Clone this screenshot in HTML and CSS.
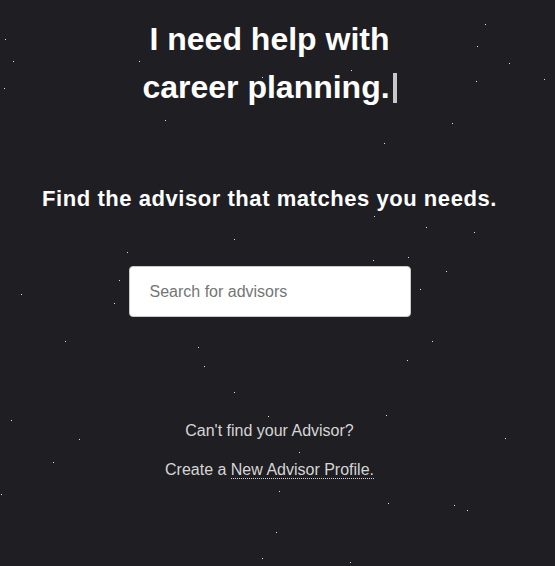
FILE: index.html
```html
<!DOCTYPE html>
<html lang="en">
<head>
<meta charset="utf-8">
<title>Find an advisor</title>
<link rel="stylesheet" href="styles.css">
</head>
<body>
<div class="stars" aria-hidden="true"></div>
<main class="page">
  <h1 class="headline">I need help with<br>career planning.<span class="cursor"></span></h1>
  <p class="subtitle">Find the advisor that matches you needs.</p>
  <div class="search">
    <input class="search-input" type="text" placeholder="Search for advisors">
  </div>
  <div class="footer-note">
    <p class="note-line">Can't find your Advisor?</p>
    <p class="note-line">Create a <a class="note-link" href="#">New Advisor Profile.</a></p>
  </div>
</main>
</body>
</html>
```

FILE: styles.css
```css
html, body {
  margin: 0;
  padding: 0;
}
body {
  background: #1f1e23;
  font-family: "Liberation Sans", Arial, sans-serif;
  color: #ffffff;
  height: 566px;
  overflow: hidden;
  position: relative;
}
.stars {
  position: absolute;
  left: 0;
  top: 0;
  width: 1px;
  height: 1px;
  background: transparent;
  box-shadow:
    5px 39px #ddd, 13px 61px #ddd, 4px 88px #ddd, 139px 61px #ddd, 165px 120px #ddd,
    234px 239px #ddd, 127px 252px #ddd, 119px 280px #ddd, 262px 77px #ddd,
    485px 24px #ddd, 477px 46px #ddd, 509px 63px #ddd, 544px 79px #ddd, 476px 81px #ddd,
    351px 70px #ddd, 452px 123px #ddd, 384px 143px #ddd, 374px 216px #ddd, 426px 227px #ddd,
    474px 232px #ddd, 373px 260px #ddd, 408px 257px #ddd, 446px 271px #ddd,
    21px 294px #ddd, 114px 303px #ddd, 65px 341px #ddd, 198px 347px #ddd, 204px 366px #ddd,
    234px 392px #ddd, 268px 416px #ddd, 11px 420px #ddd, 79px 439px #ddd, 53px 462px #ddd,
    1px 494px #ddd, 276px 532px #ddd, 262px 558px #ddd,
    420px 289px #ddd, 432px 341px #ddd, 407px 360px #ddd, 386px 415px #ddd, 505px 438px #ddd,
    299px 452px #ddd, 279px 491px #ddd, 388px 503px #ddd, 454px 505px #ddd, 467px 510px #ddd,
    350px 562px #ddd;
}
.page {
  position: relative;
  width: 539px;
  display: flex;
  flex-direction: column;
  align-items: center;
  text-align: center;
  padding-top: 15px;
}
.headline {
  margin: 0;
  font-size: 32px;
  line-height: 48px;
  font-weight: bold;
  color: #ffffff;
}
.cursor {
  display: inline-block;
  width: 4px;
  height: 30px;
  margin-left: 3px;
  background: #c8c8c8;
  vertical-align: -5px;
}
.subtitle {
  margin: 76px 0 0;
  font-size: 22px;
  line-height: 24px;
  font-weight: bold;
  letter-spacing: 0.55px;
  color: #ffffff;
}
.search {
  margin-top: 55px;
}
.search-input {
  box-sizing: border-box;
  width: 282px;
  height: 51px;
  margin: 0;
  padding: 0 20px;
  border: 1px solid #c9c9c9;
  border-radius: 4px;
  background: #ffffff;
  font-family: "Liberation Sans", Arial, sans-serif;
  font-size: 16px;
  color: #333;
  outline: none;
}
.search-input::placeholder {
  color: #757575;
}
.footer-note {
  margin-top: 94px;
}
.note-line {
  margin: 0;
  font-size: 16px;
  line-height: 39px;
  color: #d6d6d6;
}
.note-link {
  color: #d6d6d6;
  text-decoration: none;
  border-bottom: 1px dotted #d6d6d6;
}
```
